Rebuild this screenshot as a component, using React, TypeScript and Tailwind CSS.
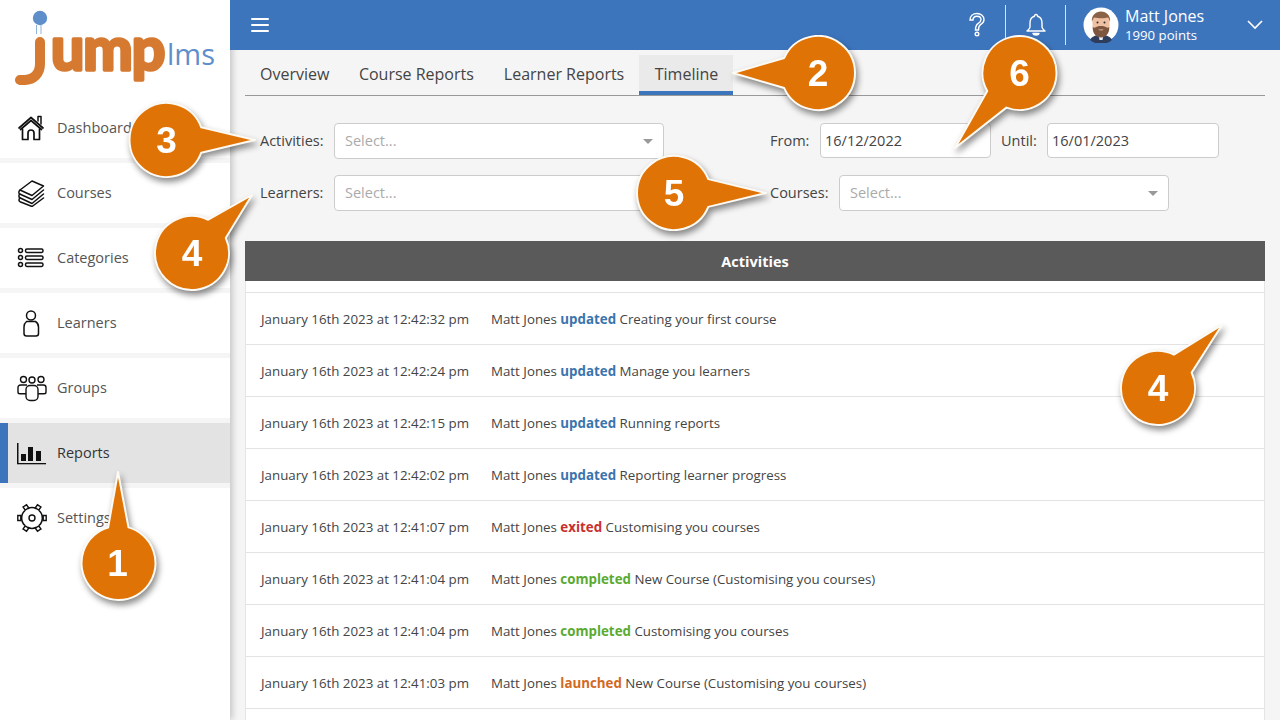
import { ReactNode } from "react";

const FONT = "font-['Open_Sans',sans-serif]";

function HouseIcon() {
  return (
    <svg width="28" height="28" viewBox="0 0 28 28" fill="none" stroke="#111" strokeWidth="1.7" strokeLinejoin="round" strokeLinecap="round">
      <path d="M2 14 14 3.500 26 14" />
      <path d="M3.500 15.500 14 6.500l10.500 9" />
      <path d="M5.500 15v10.500h5.500v-6.500a3 3 0 0 1 6 0v6.500h5.500V15" />
      <path d="M21 7V2.500h3V10" strokeWidth="1.500" />
    </svg>
  );
}

function BooksIcon() {
  return (
    <svg width="28" height="28" viewBox="0 0 28 28" fill="none" stroke="#111" strokeWidth="1.500" strokeLinejoin="round" strokeLinecap="round">
      <path d="M15 2 26.500 7 15 16.500 3 11z" />
      <path d="M3 11c-1.500 1.500-1.500 3-.3 4L15 20.500 26.500 11" />
      <path d="M2.700 15c-1.200 1.500-1 3 .1 3.800L15 24.500 26.500 15" />
      <path d="M2.800 19c-1.200 1.400-1 3 .2 3.700L15 27.500 26.500 19" />
    </svg>
  );
}

function ListIcon() {
  return (
    <svg width="28" height="28" viewBox="0 0 28 28" fill="none" stroke="#111" strokeWidth="1.500">
      <circle cx="3.500" cy="6.500" r="2" />
      <circle cx="3.500" cy="13.500" r="2" />
      <circle cx="3.500" cy="20.500" r="2" />
      <rect x="8.500" y="5" width="17.500" height="3.400" rx="1.400" />
      <rect x="8.500" y="12" width="17.500" height="3.400" rx="1.400" />
      <rect x="8.500" y="19" width="17.500" height="3.400" rx="1.400" />
    </svg>
  );
}

function PersonIcon() {
  return (
    <svg width="28" height="28" viewBox="0 0 28 28" fill="none" stroke="#111" strokeWidth="1.500">
      <circle cx="14" cy="6.500" r="4.500" />
      <path d="M9.500 12.500h9c2 1.200 3 3.200 3 5.500v6.500a2.500 2.500 0 0 1-2.500 2.500H9.500a2.500 2.500 0 0 1-2.500-2.500V18c0-2.300 1-4.300 2.500-5.500z" />
    </svg>
  );
}

function GroupIcon() {
  return (
    <svg width="30" height="28" viewBox="0 0 30 28" fill="none" stroke="#111" strokeWidth="1.400" strokeLinejoin="round">
      <circle cx="6.500" cy="5.500" r="3" />
      <circle cx="15" cy="6" r="3" />
      <circle cx="24" cy="5.500" r="3" />
      <path d="M10 11H3.500C2 11 1 12 1 13.500V18c0 1 .8 1.800 1.800 1.800H9" />
      <path d="M20 11h6.500c1.500 0 2.500 1 2.500 2.500V18c0 1-.8 1.800-1.800 1.800H21" />
      <rect x="9" y="11.500" width="12" height="15" rx="4" />
    </svg>
  );
}

function ChartIcon() {
  return (
    <svg width="30" height="28" viewBox="0 0 30 28" fill="#111">
      <rect x="0" y="4" width="1.500" height="21" />
      <rect x="0" y="24" width="29" height="1.300" />
      <rect x="4" y="15" width="5" height="7" />
      <rect x="11" y="8" width="5" height="14" />
      <rect x="19" y="12" width="5" height="10" />
    </svg>
  );
}

function GearIcon() {
  return (
    <svg width="30" height="30" viewBox="0 0 30 30" fill="none" stroke="#111" strokeWidth="1.400">
      <circle cx="15" cy="15" r="3" />
      <path d="M8 7.500a10 10 0 0 0 0 15M22 7.500a10 10 0 0 1 0 15M10.500 5.700a10 10 0 0 1 9 0M10.500 24.300a10 10 0 0 0 9 0" strokeWidth="1.600" />
      <path d="M.8 12.500h3v5h-3zM26.200 12.500h3v5h-3z" />
      <path d="M6 4 9.500 1.800l2.200 3L8.200 7zM24 4 20.500 1.800l-2.200 3L21.800 7zM6 26 9.500 28.200l2.200-3L8.200 23zM24 26 20.500 28.200l-2.200-3L21.800 23z" />
    </svg>
  );
}

function Logo() {
  return (
    <svg width="230" height="98" viewBox="0 0 230 98" className="block">
      <path d="M36.500 25v9M41 25v9" stroke="#8fb2da" strokeWidth="1" />
      <circle cx="40" cy="18" r="7.200" fill="#5f8fca" />
      <path d="M40 42v22c0 10-7 16-15 16h-5" fill="none" stroke="#d57a30" strokeWidth="10" strokeLinecap="round" />
      <text x="51" y="70" fontSize="59" letterSpacing="-1" fontFamily="Lato, sans-serif" fontWeight="700" fill="#d57a30" stroke="#d57a30" strokeWidth="3.500" strokeLinejoin="round">ump</text>
      <text x="167" y="65" fontSize="29" fontFamily="'Open Sans', sans-serif" fontWeight="400" fill="#5f8fca">lms</text>
    </svg>
  );
}

function Avatar() {
  return (
    <svg width="36" height="36" viewBox="0 0 36 36" className="shrink-0">
      <circle cx="18" cy="18" r="17.500" fill="#fff" />
      <path d="M7 33c2-4 6-5 11-5s9 1 11 5a17 17 0 0 1-22 0z" fill="#2f3d5c" />
      <path d="M15.500 28h5l-1 5h-3z" fill="#e8eef5" />
      <path d="M9.500 13c0-5 4.500-7.500 8.500-7.500s8.500 2.500 8.500 7.500v6c0 6-3.500 10-8.500 10s-8.500-4-8.500-10z" fill="#f0c0a2" />
      <path d="M9.800 20c1 1 2.200 1 3.200 0 2-1.500 8-1.500 10 0 1 1 2.200 1 3.200 0 .5 6-3.200 10.500-8.200 10.500S9.300 26 9.800 20z" fill="#7d5640" />
      <path d="M15.500 22.500h5c-.5 1.200-4.500 1.200-5 0z" fill="#f0c0a2" />
      <path d="M9 15c-1-6 3.500-10.500 9-10.500S28 9 27 15c-.5-2-1-3.500-2-4.500-3 1-10 1-13.500 0-1.500 1-2 2.500-2.500 4.500z" fill="#8a6248" />
      <circle cx="14.500" cy="15.500" r="1" fill="#2b2b2b" />
      <circle cx="21.500" cy="15.500" r="1" fill="#2b2b2b" />
    </svg>
  );
}

function NavItem({ icon, label, active }: { icon: ReactNode; label: string; active?: boolean }) {
  return (
    <div className={`flex h-[60px] items-center ${active ? "border-l-[8px] border-[#3d75bd] bg-[#e3e3e3] pl-[9px] text-[#333]" : "bg-white pl-[17px] text-[#555]"}`}>
      <span className="flex w-[40px] shrink-0 items-center">{icon}</span>
      <span className="text-[14.500px]">{label}</span>
    </div>
  );
}

function Caret() {
  return <span className="h-0 w-0 border-x-[5px] border-t-[5px] border-x-transparent border-t-[#999]" />;
}

function SelectBox() {
  return (
    <div className="flex h-[36px] w-[330px] items-center justify-between rounded-[4px] border border-[#ccc] bg-white pl-[10px] pr-[10px] text-[14.500px] text-[#aaa]">
      <span>Select...</span>
      <Caret />
    </div>
  );
}

function DateBox({ value, width }: { value: string; width: string }) {
  return <div className={`mb-[1px] flex h-[35px] items-center rounded-[4px] border border-[#ccc] bg-white pl-[4px] text-[14.500px] text-[#444] ${width}`}>{value}</div>;
}

type Row = { time: string; verb: string; verbClass: string; subject: string };

const BLUE = "text-[#3a74ad]";
const rows: Row[] = [
  { time: "January 16th 2023 at 12:42:32 pm", verb: "updated", verbClass: BLUE, subject: "Creating your first course" },
  { time: "January 16th 2023 at 12:42:24 pm", verb: "updated", verbClass: BLUE, subject: "Manage you learners" },
  { time: "January 16th 2023 at 12:42:15 pm", verb: "updated", verbClass: BLUE, subject: "Running reports" },
  { time: "January 16th 2023 at 12:42:02 pm", verb: "updated", verbClass: BLUE, subject: "Reporting learner progress" },
  { time: "January 16th 2023 at 12:41:07 pm", verb: "exited", verbClass: "text-[#c9302c]", subject: "Customising you courses" },
  { time: "January 16th 2023 at 12:41:04 pm", verb: "completed", verbClass: "text-[#5aaa32]", subject: "New Course (Customising you courses)" },
  { time: "January 16th 2023 at 12:41:04 pm", verb: "completed", verbClass: "text-[#5aaa32]", subject: "Customising you courses" },
  { time: "January 16th 2023 at 12:41:03 pm", verb: "launched", verbClass: "text-[#d2691e]", subject: "New Course (Customising you courses)" },
];

const callouts = [
  { n: "1", x: 118.500, y: 563, tx: 118, ty: 472, spread: 16, dx: -1 },
  { n: "2", x: 818, y: 73, tx: 733, ty: 73, spread: 24, dx: 0 },
  { n: "3", x: 166.500, y: 140, tx: 255, ty: 140, spread: 20, dx: 0 },
  { n: "4", x: 192, y: 253, tx: 252, ty: 195, spread: 20, dx: 0 },
  { n: "4", x: 1158, y: 388, tx: 1222, ty: 325, spread: 20, dx: 0 },
  { n: "5", x: 674, y: 193, tx: 766, ty: 193, spread: 22, dx: 0 },
  { n: "6", x: 1019.500, y: 73, tx: 955, ty: 148, spread: 20, dx: 0 },
];

function calloutPath(c: (typeof callouts)[number]) {
  const r = 37;
  const a = Math.atan2(c.ty - c.y, c.tx - c.x);
  const d = (c.spread * Math.PI) / 180;
  const p1 = [c.x + r * Math.cos(a - d), c.y + r * Math.sin(a - d)];
  const p2 = [c.x + r * Math.cos(a + d), c.y + r * Math.sin(a + d)];
  return `M${p1[0]} ${p1[1]}L${c.tx} ${c.ty}L${p2[0]} ${p2[1]}A${r} ${r} 0 1 1 ${p1[0]} ${p1[1]}Z`;
}

function Callouts() {
  return (
    <svg width="1280" height="720" viewBox="0 0 1280 720" className="pointer-events-none absolute left-0 top-0 z-30">
      {callouts.map((c, i) => (
        <g key={i} className="[filter:drop-shadow(2px_4px_3px_rgba(0,0,0,0.45))]">
          <path d={calloutPath(c)} fill="#e07306" stroke="#fdfaf3" strokeWidth="2" strokeLinejoin="round" />
          <text x={c.x + c.dx} y={c.y + 13} textAnchor="middle" fontSize="37" fontWeight="700" fontFamily="'Liberation Sans', sans-serif" fill="#fff">{c.n}</text>
        </g>
      ))}
    </svg>
  );
}

export default function App() {
  return (
    <div className={`relative flex h-[720px] w-[1280px] overflow-hidden bg-[#f5f5f5] ${FONT}`}>
      <aside className="relative z-10 flex w-[230px] shrink-0 flex-col bg-[#f5f5f5] shadow-[2px_0_7px_rgba(0,0,0,0.22)]">
        <div className="h-[98px] bg-white"><Logo /></div>
        <div className="flex flex-col gap-[5px]">
          <NavItem icon={<HouseIcon />} label="Dashboard" />
          <NavItem icon={<BooksIcon />} label="Courses" />
          <NavItem icon={<ListIcon />} label="Categories" />
          <NavItem icon={<PersonIcon />} label="Learners" />
          <NavItem icon={<GroupIcon />} label="Groups" />
          <NavItem icon={<ChartIcon />} label="Reports" active />
          <NavItem icon={<GearIcon />} label="Settings" />
        </div>
        <div className="flex-1 bg-white" />
      </aside>

      <main className="flex min-w-0 flex-1 flex-col">
        <header className="relative z-20 flex h-[50px] items-center bg-[#3d75bd] pl-[21px] text-white">
          <div className="flex w-[18px] flex-col gap-[3.500px]">
            <span className="h-[2.500px] rounded-full bg-white" />
            <span className="h-[2.500px] rounded-full bg-white" />
            <span className="h-[2.500px] rounded-full bg-white" />
          </div>
          <div className="ml-auto flex h-full items-center">
            <svg width="18" height="26" viewBox="0 0 18 26" fill="none" stroke="#fff" strokeWidth="1.400">
              <path d="M2 8c0-4 3-6.500 7-6.500s7 2.500 7 6c0 2.500-1.500 4-3.500 5.200C10.500 14 10.500 15 10.500 18h-3c0-3.500.5-5 2.500-6.300 2-1.200 3-2.200 3-4.200 0-2-1.500-3.300-4-3.300S5 5.500 5 8z" />
              <circle cx="9" cy="22" r="1.800" />
            </svg>
            <span className="ml-[19px] h-[40px] w-px bg-white/80" />
            <svg className="ml-[20px]" width="20" height="24" viewBox="0 0 20 24" fill="none" stroke="#fff" strokeWidth="1.400" strokeLinejoin="round">
              <path d="M10 1.500a1.500 1.500 0 0 1 1.500 1.700C14.500 4 16 6.500 16 10v4c0 1.500 1 2.500 3 4H1c2-1.500 3-2.500 3-4v-4c0-3.500 1.500-6 4.500-6.800A1.500 1.500 0 0 1 10 1.500z" />
              <path d="M7 20.500h6c-.5 2-5.500 2-6 0z" fill="#fff" />
            </svg>
            <span className="ml-[19px] h-[40px] w-px bg-white/80" />
            <div className="ml-[17px]"><Avatar /></div>
            <div className="ml-[6px] w-[122px] leading-none">
              <div className="text-[16px] leading-[20px]">Matt Jones</div>
              <div className="text-[13.200px] leading-[18px]">1990 points</div>
            </div>
            <svg className="mr-[17px]" width="16" height="10" viewBox="0 0 16 10" fill="none" stroke="#fff" strokeWidth="1.600">
              <path d="M1 1l7 7 7-7" />
            </svg>
          </div>
        </header>

        <div className="flex min-h-0 flex-1 flex-col px-[15px]">
          <nav className="mt-[5px] flex h-[41px] border-b border-[#999] text-[16px] text-[#444]">
            <span className="flex h-[40px] items-center pb-[2px] pl-[15px] pr-[14.500px]">Overview</span>
            <span className="flex h-[40px] items-center px-[15px] pb-[2px]">Course Reports</span>
            <span className="flex h-[40px] items-center pb-[2px] pl-[15px] pr-[14.500px]">Learner Reports</span>
            <span className="flex h-[40px] items-center border-b-[4px] border-[#3d75bd] bg-[#eaeaea] pb-0 pl-[16px] pr-[15px] pt-[2px]">Timeline</span>
          </nav>

          <div className="mt-[27px] flex items-center text-[14.500px] text-[#444]">
            <span className="w-[89px] pl-[15px]">Activities:</span>
            <SelectBox />
            <span className="ml-[106px] w-[50px]">From:</span>
            <DateBox value="16/12/2022" width="w-[171px]" />
            <span className="ml-[10px] w-[46px]">Until:</span>
            <DateBox value="16/01/2023" width="w-[172px]" />
          </div>

          <div className="mt-[16px] flex items-center text-[14.500px] text-[#444]">
            <span className="w-[89px] pl-[15px]">Learners:</span>
            <SelectBox />
            <span className="ml-[106px] w-[69px]">Courses:</span>
            <SelectBox />
          </div>

          <div className="mt-[30px] flex h-[40px] items-center justify-center bg-[#5a5a5a] pt-[1px] text-[14.500px] font-bold text-white">Activities</div>
          <div className="min-h-0 flex-1 border-x border-[#e5e5e5] bg-white">
            <div className="h-[12px] border-b border-[#e3e3e3]" />
            {rows.map((r, i) => (
              <div key={i} className="flex h-[52px] items-center border-b border-[#e3e3e3] pt-[3px] text-[13.320px] text-[#444]">
                <span className="w-[245px] shrink-0 pl-[15px]">{r.time}</span>
                <span>
                  Matt Jones <b className={r.verbClass}>{r.verb}</b> {r.subject}
                </span>
              </div>
            ))}
          </div>
        </div>
      </main>

      <Callouts />
    </div>
  );
}
